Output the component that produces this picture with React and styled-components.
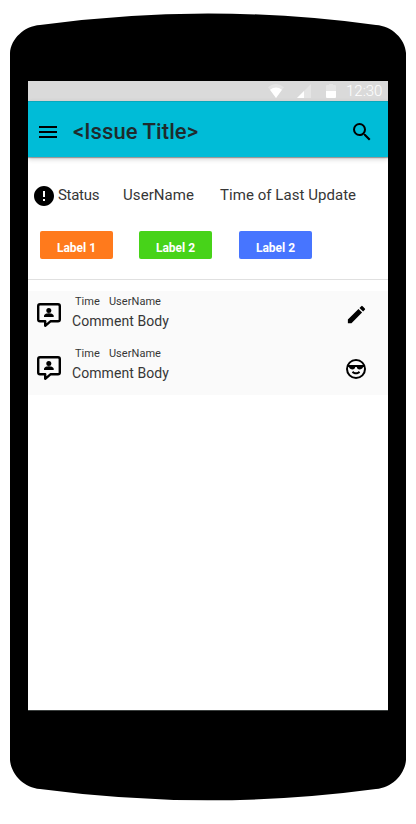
import React from "react";
import styled, { createGlobalStyle } from "styled-components";

const GlobalStyle = createGlobalStyle`
  body { margin: 0; background: #fff; font-family: Roboto, sans-serif; color: #363636; }
  svg { display: block; flex: none; }
`;

const Phone = styled.div`
  width: 396px;
  padding: 13px 10px 0;
`;

const Body = styled.div`
  background: #000;
  padding: 0 18px;
`;

const Screen = styled.main`
  height: 629px;
  background: #fff;
  border-bottom: 1px solid #3c403f;
`;

const StatusBar = styled.div`
  display: flex;
  align-items: center;
  justify-content: flex-end;
  height: 20px;
  padding-right: 6px;
  background: #dadada;
  box-sizing: border-box;
`;

const StatusIcons = styled.div`
  display: grid;
  grid-template-columns: 28px 30px 20px;
  margin-top: -1px;
`;

const Clock = styled.span`
  width: 36px;
  font-size: 15px;
  line-height: 20px;
  font-weight: 300;
  white-space: nowrap;
  color: #fff;
`;

const AppBar = styled.header`
  display: flex;
  align-items: center;
  height: 56px;
  box-sizing: border-box;
  padding: 5px 14px 0 8px;
  border-top: 1px solid #05a9be;
  background: #00bcd7;
  box-shadow: 0 1px 1px rgba(0, 0, 0, 0.3), 0 2px 5px rgba(0, 0, 0, 0.2);
`;

const Title = styled.h1`
  flex: 1;
  margin: 0 0 0 13px;
  font-size: 22px;
  line-height: 24px;
  font-weight: 500;
  letter-spacing: 0.08px;
  color: #1f2b2d;
`;

const Details = styled.div`
  display: grid;
  grid-template-columns: 26px 65px 97px auto;
  align-items: center;
  height: 24px;
  padding: 27px 0 23px 4px;
`;

const Detail = styled.span`
  font-size: 15px;
  line-height: 20px;
  white-space: nowrap;
  letter-spacing: ${({ $spacing }) => $spacing || 0}px;
  margin-top: -2px;
`;

const Labels = styled.div`
  display: grid;
  grid-template-columns: 99px 100px 73px;
  height: 28px;
  padding: 0 12px 20px;
  border-bottom: 1px solid #e0e0e0;
`;

const Label = styled.span`
  width: 73px;
  border-radius: 2px;
  background: ${({ $color }) => $color};
  color: #fff;
  font-size: 12px;
  font-weight: 700;
  line-height: 34px;
  height: 28px;
  text-align: center;
`;

const Comments = styled.section`
  margin-top: 11px;
  background: #fafafa;
`;

const Comment = styled.article`
  display: grid;
  grid-template-columns: 44px 1fr 24px;
  height: 52px;
  padding: 0 ${({ $end }) => $end}px 0 0;
`;

const Slot = styled.div`
  padding: ${({ $top }) => $top}px 0 0 ${({ $left }) => $left || 0}px;
`;

const Meta = styled.div`
  display: flex;
  gap: 9px;
  padding: 4px 0 0 3px;
  font-size: 11px;
  line-height: 14px;
  letter-spacing: 0.05px;
`;

const Text = styled.p`
  margin: 2px 0 0;
  font-size: 14px;
  line-height: 20px;
  letter-spacing: 0.07px;
`;

const Icon = ({ d, size = 24 }) => (
  <svg width={size} height={size} viewBox="0 0 24 24">
    <path d={d} />
  </svg>
);

const paths = {
  menu: "M3 18h18v-2H3v2zm0-5h18v-2H3v2zm0-7v2h18V6H3z",
  search:
    "M15.5 14h-.79l-.28-.27A6.471 6.471 0 0 0 16 9.5 6.5 6.5 0 1 0 9.5 16c1.61 0 3.09-.59 4.23-1.57l.27.28v.79l5 4.99L20.49 19l-4.99-5zm-6 0C7.01 14 5 11.99 5 9.5S7.01 5 9.5 5 14 7.01 14 9.5 11.99 14 9.5 14z",
  error:
    "M12 2C6.48 2 2 6.48 2 12s4.48 10 10 10 10-4.48 10-10S17.52 2 12 2zm1 15h-2v-2h2v2zm0-4h-2V7h2v6z",
  edit: "M3 17.25V21h3.75L17.81 9.94l-3.75-3.75L3 17.25zM20.71 7.04a.996.996 0 0 0 0-1.41l-2.34-2.34a.996.996 0 0 0-1.41 0l-1.83 1.83 3.75 3.75 1.83-1.83z",
  cool: "M19,10C19,11.38 16.88,12.5 15.5,12.5C14.12,12.5 12.75,11.38 12.75,10H11.25C11.25,11.38 9.88,12.5 8.5,12.5C7.12,12.5 5,11.38 5,10H4.25C4.09,10.64 4,11.31 4,12A8,8 0 0,0 12,20A8,8 0 0,0 20,12C20,11.31 19.91,10.64 19.75,10H19M12,4C9.04,4 6.45,5.61 5.07,8H18.93C17.55,5.61 14.96,4 12,4M22,12A10,10 0 0,1 12,22A10,10 0 0,1 2,12A10,10 0 0,1 12,2A10,10 0 0,1 22,12M12,17.23C10.25,17.23 8.71,16.5 7.81,15.42L9.23,14C9.68,14.72 10.75,15.23 12,15.23C13.25,15.23 14.32,14.72 14.77,14L16.19,15.42C15.29,16.5 13.75,17.23 12,17.23Z",
};

const CommentIcon = () => (
  <svg width="24" height="25" viewBox="0 0 24 25">
    <path
      d="M3 1.2h18q1.8 0 1.8 1.8v13.5q0 1.8-1.8 1.8h-7.6L8.2 22.8v-4.5H3q-1.8 0-1.8-1.8V3q0-1.8 1.8-1.8z"
      fill="none"
      stroke="#000"
      strokeWidth="2.4"
      strokeLinejoin="round"
    />
    <circle cx="11.8" cy="7.4" r="2.5" />
    <path d="M7 14v-1.2c0-1.7 3.2-2.5 4.8-2.5s4.9.8 4.9 2.5V14z" />
  </svg>
);

const CommentRow = ({ iconTop, end, actionTop, action, actionSize }) => (
  <Comment $end={end}>
    <Slot $top={iconTop} $left={9}>
      <CommentIcon />
    </Slot>
    <div>
      <Meta>
        <span>Time</span>
        <span>UserName</span>
      </Meta>
      <Text>Comment Body</Text>
    </div>
    <Slot $top={actionTop}>
      <Icon d={action} size={actionSize} />
    </Slot>
  </Comment>
);

export default function App() {
  return (
    <>
      <GlobalStyle />
      <Phone>
        <svg width="396" height="68" viewBox="0 0 396 68">
          <path d="M0 68V40C1 26 14 13 30 12Q114 .5 198 .5T366 12C382 13 395 26 396 40V68z" />
        </svg>
        <Body>
          <Screen>
            <StatusBar>
              <StatusIcons>
                <svg width="16" height="14" viewBox="0 0 16 14">
                  <path d="M0 3.2Q8-3 16 3.2L8 14z" fill="#fff" opacity=".3" />
                  <path d="M2 5.7Q8 1.3 14 5.7L8 14z" fill="#fff" />
                </svg>
                <svg width="15" height="14" viewBox="0 0 15 14">
                  <path d="M1 14L15 0v14z" fill="#fff" opacity=".3" />
                  <path d="M1 14L8 7V14z" fill="#fff" />
                </svg>
                <svg width="10" height="14" viewBox="0 0 10 14">
                  <path d="M0 2Q0 1 1 1h2V0h4v1h2q1 0 1 1v5H0z" fill="#fff" opacity=".3" />
                  <path d="M0 7h10v6q0 1-1 1H1q-1 0-1-1z" fill="#fff" />
                </svg>
              </StatusIcons>
              <Clock>12:30</Clock>
            </StatusBar>
            <AppBar>
              <Icon d={paths.menu} />
              <Title>&lt;Issue Title&gt;</Title>
              <Icon d={paths.search} />
            </AppBar>
            <Details>
              <Icon d={paths.error} />
              <Detail $spacing={-0.3}>Status</Detail>
              <Detail $spacing={0.08}>UserName</Detail>
              <Detail $spacing={0.05}>Time of Last Update</Detail>
            </Details>
            <Labels>
              <Label $color="#ff7a1c">Label 1</Label>
              <Label $color="#47d319">Label 2</Label>
              <Label $color="#4775ff">Label 2</Label>
            </Labels>
            <Comments>
              <CommentRow iconTop={12} end={19} actionTop={12} action={paths.edit} actionSize={23} />
              <CommentRow iconTop={13} end={20} actionTop={14} action={paths.cool} />
            </Comments>
          </Screen>
        </Body>
        <svg width="396" height="90" viewBox="0 0 396 90">
          <path d="M0 0V49C1 63 14 77 30 78Q114 89.3 198 89.3T366 78C382 77 395 63 396 49V0z" />
        </svg>
      </Phone>
    </>
  );
}
